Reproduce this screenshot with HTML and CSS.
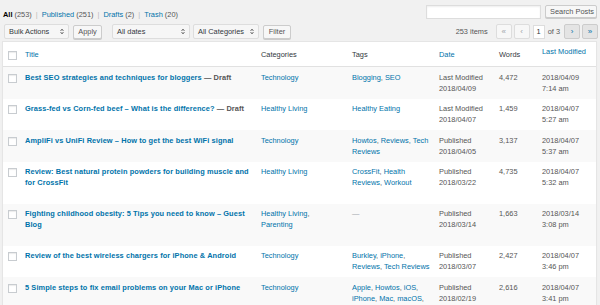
FILE: index.html
```html
<!DOCTYPE html>
<html>
<head>
<meta charset="utf-8">
<link rel="stylesheet" href="styles.css">
</head>
<body>
<div class="page">
  <div class="top">
    <ul class="subsubsub">
      <li><span class="current">All</span> <span class="count">(253)</span><span class="sep">|</span></li>
      <li><a>Published</a> <span class="count">(251)</span><span class="sep">|</span></li>
      <li><a>Drafts</a> <span class="count">(2)</span><span class="sep">|</span></li>
      <li><a>Trash</a> <span class="count">(20)</span></li>
    </ul>
    <div class="search">
      <div class="search-input"></div>
      <div class="btn search-btn">Search Posts</div>
    </div>
  </div>
  <div class="tablenav">
    <div class="actions">
      <div class="select sel-bulk">Bulk Actions<svg class="arr" viewBox="0 0 6 10" width="4" height="7"><path d="M1 4 L3 1.6 L5 4 M1 6 L3 8.4 L5 6" fill="none" stroke="#333" stroke-width="1.3"/></svg></div>
      <div class="btn btn-apply">Apply</div>
      <div class="select sel-dates">All dates<svg class="arr" viewBox="0 0 6 10" width="4" height="7"><path d="M1 4 L3 1.6 L5 4 M1 6 L3 8.4 L5 6" fill="none" stroke="#333" stroke-width="1.3"/></svg></div>
      <div class="select sel-cats">All Categories<svg class="arr" viewBox="0 0 6 10" width="4" height="7"><path d="M1 4 L3 1.6 L5 4 M1 6 L3 8.4 L5 6" fill="none" stroke="#333" stroke-width="1.3"/></svg></div>
      <div class="btn btn-filter">Filter</div>
    </div>
    <div class="pagination">
      <span class="items">253 items</span>
      <span class="pbtn disabled">«</span>
      <span class="pbtn disabled">‹</span>
      <span class="pinput">1</span>
      <span class="of">of 3</span>
      <span class="pbtn">›</span>
      <span class="pbtn">»</span>
    </div>
  </div>
  <table class="list">
    <colgroup>
      <col class="c-cb"><col class="c-title"><col class="c-cat"><col class="c-tags"><col class="c-date"><col class="c-words"><col class="c-mod">
    </colgroup>
    <thead>
      <tr>
        <th class="cb"><span class="box"></span></th>
        <th><a>Title</a></th>
        <th>Categories</th>
        <th>Tags</th>
        <th><a>Date</a></th>
        <th>Words</th>
        <th class="mod"><a>Last Modified</a></th>
      </tr>
    </thead>
    <tbody>
      <tr>
        <td class="cb"><span class="box"></span></td>
        <td class="title"><strong><a>Best SEO strategies and techniques for bloggers</a> <span class="state">— Draft</span></strong><div class="row-actions"></div></td>
        <td class="cat"><a>Technology</a></td>
        <td class="tags"><a>Blogging</a>, <a>SEO</a></td>
        <td>Last Modified<br>2018/04/09</td>
        <td>4,472</td>
        <td>2018/04/09<br>7:14 am</td>
      </tr>
      <tr>
        <td class="cb"><span class="box"></span></td>
        <td class="title"><strong><a>Grass-fed vs Corn-fed beef – What is the difference?</a> <span class="state">— Draft</span></strong><div class="row-actions"></div></td>
        <td class="cat"><a>Healthy Living</a></td>
        <td class="tags"><a>Healthy Eating</a></td>
        <td>Last Modified<br>2018/04/07</td>
        <td>1,459</td>
        <td>2018/04/07<br>5:27 am</td>
      </tr>
      <tr>
        <td class="cb"><span class="box"></span></td>
        <td class="title"><strong><a>AmpliFi vs UniFi Review – How to get the best WiFi signal</a></strong><div class="row-actions"></div></td>
        <td class="cat"><a>Technology</a></td>
        <td class="tags"><a>Howtos</a>, <a>Reviews</a>, <a>Tech Reviews</a></td>
        <td>Published<br>2018/04/05</td>
        <td>3,137</td>
        <td>2018/04/07<br>5:37 am</td>
      </tr>
      <tr>
        <td class="cb"><span class="box"></span></td>
        <td class="title"><strong><a>Review: Best natural protein powders for building muscle and for CrossFit</a></strong><div class="row-actions"></div></td>
        <td class="cat"><a>Healthy Living</a></td>
        <td class="tags"><a>CrossFit</a>, <a>Health Reviews</a>, <a>Workout</a></td>
        <td>Published<br>2018/03/22</td>
        <td>4,735</td>
        <td>2018/04/07<br>5:32 am</td>
      </tr>
      <tr>
        <td class="cb"><span class="box"></span></td>
        <td class="title"><strong><a>Fighting childhood obesity: 5 Tips you need to know – Guest Blog</a></strong><div class="row-actions"></div></td>
        <td class="cat"><a>Healthy Living</a>, <a>Parenting</a></td>
        <td class="tags"><span class="dash">—</span></td>
        <td>Published<br>2018/03/14</td>
        <td>1,663</td>
        <td>2018/03/14<br>3:08 pm</td>
      </tr>
      <tr>
        <td class="cb"><span class="box"></span></td>
        <td class="title"><strong><a>Review of the best wireless chargers for iPhone &amp; Android</a></strong><div class="row-actions"></div></td>
        <td class="cat"><a>Technology</a></td>
        <td class="tags"><a>Burkley</a>, <a>iPhone</a>, <a>Reviews</a>, <a>Tech Reviews</a></td>
        <td>Published<br>2018/03/07</td>
        <td>2,427</td>
        <td>2018/04/07<br>3:46 pm</td>
      </tr>
      <tr>
        <td class="cb"><span class="box"></span></td>
        <td class="title"><strong><a>5 Simple steps to fix email problems on your Mac or iPhone</a></strong><div class="row-actions"></div></td>
        <td class="cat"><a>Technology</a></td>
        <td class="tags"><a>Apple</a>, <a>Howtos</a>, <a>iOS</a>, <a>iPhone</a>, <a>Mac</a>, <a>macOS</a>, <a>Tech Tips</a></td>
        <td>Published<br>2018/02/19</td>
        <td>2,616</td>
        <td>2018/04/07<br>3:41 pm</td>
      </tr>
    </tbody>
  </table>
</div>
</body>
</html>
```

FILE: styles.css
```css
html, body {
  margin: 0;
  padding: 0;
  overflow: hidden;
  background: #f1f1f1;
}
body {
  font-family: "Liberation Sans", Arial, sans-serif;
  font-size: 7.4px;
  color: #555;
  width: 600px;
  height: 305px;
}
a {
  color: #0073aa;
  text-decoration: none;
}
.page {
  padding: 0 2px 0 2px;
}
.top {
  display: flex;
  justify-content: space-between;
  align-items: flex-start;
  height: 22px;
}
.subsubsub {
  list-style: none;
  margin: 0;
  padding: 10px 0 0 1px;
  display: flex;
  line-height: 10px;
}
.subsubsub li {
  white-space: nowrap;
}
.subsubsub .current {
  color: #000;
  font-weight: bold;
}
.subsubsub .sep {
  color: #bbb;
  margin: 0 4px;
}
.search {
  display: flex;
  gap: 4px;
  margin-top: 5px;
  margin-right: 1px;
}
.search-input {
  width: 113px;
  height: 12px;
  background: #fff;
  border: 1px solid #ddd;
  box-shadow: inset 0 1px 2px rgba(0,0,0,.07);
}
.btn {
  box-sizing: border-box;
  height: 14px;
  line-height: 12px;
  padding: 0 4px;
  background: #f7f7f7;
  border: 1px solid #ccc;
  border-radius: 2px;
  box-shadow: 0 1px 0 #ccc;
  color: #555;
  text-align: center;
  white-space: nowrap;
}
.search-btn {
  width: 52px;
  height: 13px;
  line-height: 11px;
}
.tablenav {
  display: flex;
  justify-content: space-between;
  align-items: center;
  height: 15px;
  padding: 2px 0 2px 0;
}
.actions {
  display: flex;
  align-items: center;
}
.select {
  box-sizing: border-box;
  height: 15px;
  display: flex;
  align-items: center;
  justify-content: space-between;
  padding: 0 4px 0 4px;
  background: #f6f6f6;
  border: 1px solid #ddd;
  border-radius: 2px;
  color: #32373c;
  white-space: nowrap;
}
.arr {
  display: block;
}
.sel-bulk { width: 65px; margin-left: 2px; }
.btn-apply { width: 29px; margin-left: 4px; }
.sel-dates { width: 78px; margin-left: 10px; }
.sel-cats { width: 66px; margin-left: 3px; }
.btn-filter { width: 28px; margin-left: 4px; }
.pagination {
  display: flex;
  align-items: center;
  gap: 2px;
}
.items {
  margin-right: 6px;
}
.pbtn {
  box-sizing: border-box;
  width: 16px;
  height: 15px;
  line-height: 13px;
  text-align: center;
  border: 1px solid #ccc;
  background: #e4e4e4;
  color: #0073aa;
  font-size: 8px;
  border-radius: 2px;
}
.pbtn.disabled {
  background: #f7f7f7;
  border-color: #ddd;
  color: #a0a5aa;
}
.pinput {
  box-sizing: border-box;
  width: 12px;
  height: 14px;
  line-height: 12px;
  text-align: center;
  background: #fff;
  border: 1px solid #ddd;
  color: #32373c;
  margin-left: 1px;
}
.of {
  margin: 0 2px 0 1px;
}
.list {
  width: 595px;
  border-collapse: separate;
  border-spacing: 0;
  table-layout: fixed;
  background: #fff;
  border: 1px solid #e5e5e5;
  box-shadow: 0 1px 1px rgba(0,0,0,.04);
}
.c-cb { width: 17px; }
.c-title { width: 236px; }
.c-cat { width: 91px; }
.c-tags { width: 87px; }
.c-date { width: 60px; }
.c-words { width: 43px; }
.c-mod { width: 59px; }
.list th {
  text-align: left;
  font-weight: normal;
  color: #32373c;
  line-height: 11px;
  padding: 7px 5px 6px 5px;
  border-bottom: 1px solid #e1e1e1;
  vertical-align: top;
  white-space: nowrap;
}
.list th.mod {
  padding-top: 4px;
}
.list td {
  vertical-align: top;
  line-height: 11px;
  padding: 4.5px 2px 5px 5px;
}
.list td.cat {
  padding-right: 6px;
}
.list tbody tr:nth-child(odd) {
  background: #f9f9f9;
}
.list .cb {
  padding-left: 5px;
  padding-right: 0;
}
.box {
  display: block;
  box-sizing: border-box;
  width: 9px;
  height: 9px;
  border: 1px solid #c8ccd0;
  background: #fff;
  box-shadow: inset 0 1px 1px rgba(0,0,0,.08);
}
.list th.cb .box {
  margin-top: 2px;
}
.list td.cb .box {
  margin-top: 2px;
}
.list td.title strong {
  display: block;
  font-weight: bold;
  letter-spacing: 0.1px;
}
.state {
  color: #555;
}
.row-actions {
  height: 10.5px;
}
.dash {
  color: #a0a5aa;
}
```
